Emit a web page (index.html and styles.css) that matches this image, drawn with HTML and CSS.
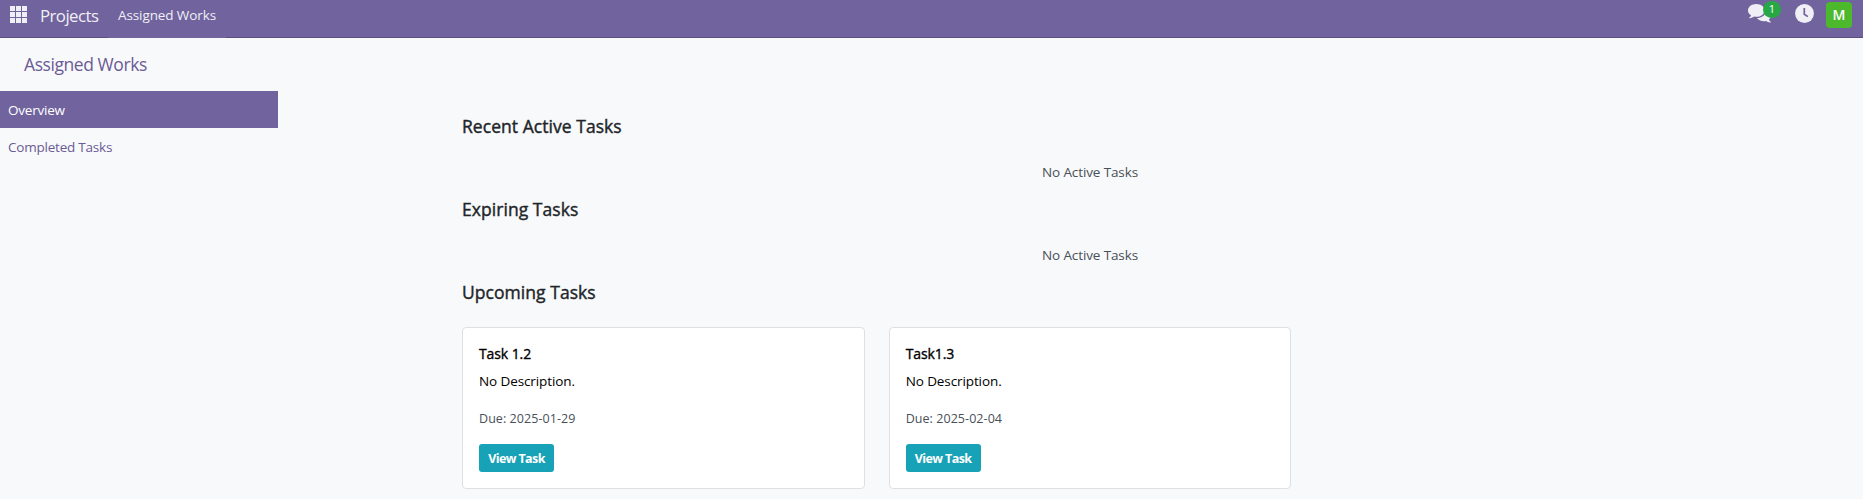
FILE: index.html
```html
<!DOCTYPE html>
<html lang="en">
<head>
<meta charset="utf-8">
<title>Assigned Works</title>
<link rel="stylesheet" href="styles.css">
</head>
<body>
<header class="navbar">
  <svg class="apps" width="17" height="17" viewBox="0 0 17 17" fill="currentColor"><path d="M0 0h5v5H0zM6 0h5v5H6zM12 0h5v5h-5zM0 6h5v5H0zM6 6h5v5H6zM12 6h5v5h-5zM0 12h5v5H0zM6 12h5v5H6zM12 12h5v5h-5z"/></svg>
  <a class="brand"><span>Projects</span></a>
  <a class="nav-item"><span>Assigned Works</span></a>
  <div class="systray">
    <div class="messages">
      <svg width="23" height="19" viewBox="0 0 23 19" fill="currentColor"><path d="M17.6 6.2c3.200.7 5.400 2.800 5.400 5.300 0 1.500-.8 2.900-2.100 3.900.3.900.9 1.600 1.700 2.300.5.400.3.800-.3.800-1.700-.1-3.200-.7-4.400-1.500-.6.100-1.200.2-1.900.2-3.100 0-5.900-1.200-7.100-3.100 5-.1 8.900-3.100 8.900-6.800 0-.4-.1-.7-.2-1.100z"/><path d="M8.300 0c4.600 0 8.300 2.800 8.300 6.400s-3.700 6.400-8.300 6.400c-.7 0-1.400-.1-2-.2-1.300.9-2.800 1.500-4.500 1.600-.6 0-.8-.4-.3-.8.8-.6 1.300-1.300 1.500-2.200C1.100 10 0 8.300 0 6.400 0 2.800 3.700 0 8.300 0z"/></svg>
      <span class="badge">1</span>
    </div>
    <svg class="clock" width="19" height="19" viewBox="0 0 19 19"><circle cx="9.500" cy="9.500" r="9.400" fill="currentColor"/><path d="M9.300 4v6.200l3.600 2.400" fill="none" stroke="#71639e" stroke-width="1.700"/></svg>
    <span class="avatar">M</span>
  </div>
</header>
<div class="layout">
  <aside class="sidebar">
    <h1 class="page-title"><span>Assigned Works</span></h1>
    <a class="side-link side-link-active"><span>Overview</span></a>
    <a class="side-link"><span>Completed Tasks</span></a>
  </aside>
  <main class="content">
    <h2 class="heading"><span>Recent Active Tasks</span></h2>
    <p class="empty"><span>No Active Tasks</span></p>
    <h2 class="heading"><span>Expiring Tasks</span></h2>
    <p class="empty"><span>No Active Tasks</span></p>
    <h2 class="heading"><span>Upcoming Tasks</span></h2>
    <div class="cards">
      <article class="card">
        <h3 class="card-title"><span>Task 1.2</span></h3>
        <p class="card-text"><span>No Description.</span></p>
        <p class="due"><span>Due: 2025-01-29</span></p>
        <a class="button"><span>View Task</span></a>
      </article>
      <article class="card">
        <h3 class="card-title"><span>Task1.3</span></h3>
        <p class="card-text"><span>No Description.</span></p>
        <p class="due"><span>Due: 2025-02-04</span></p>
        <a class="button"><span>View Task</span></a>
      </article>
    </div>
  </main>
</div>
</body>
</html>
```
FILE: styles.css
```css
* { box-sizing: border-box; }
body {
  margin: 0;
  background: #f8f9fa;
  color: #212529;
  font-family: "Open Sans", "Noto Sans", sans-serif;
  font-size: 13.5px;
  line-height: 20px;
}
h1, h2, h3, p { margin: 0; }
.navbar {
  display: flex;
  height: 38px;
  background: linear-gradient(#5a4f7f, #5a4f7f) bottom / 100% 1px no-repeat #71639e;
  color: #f0eff5;
}
.apps { margin: 6px 0 0 10px; }
.brand {
  width: 81px;
  padding: 6px 0 0 13px;
  font-size: 16.8px;
  letter-spacing: -0.55px;
}
.nav-item {
  width: 118px;
  padding: 5px 0 0 10px;
  background: #71639e;
  letter-spacing: -0.1px;
  white-space: nowrap;
}
.systray { display: flex; margin-left: auto; padding-right: 11px; }
.messages { position: relative; width: 47px; padding-top: 4px; }
.badge {
  position: absolute;
  left: 15px;
  top: 1px;
  width: 18px;
  height: 17px;
  border-radius: 9px;
  background: #28a745;
  color: #fff;
  font-size: 11px;
  line-height: 16px;
  text-align: center;
}
.clock { margin-top: 4px; }
.avatar {
  width: 26px;
  height: 26px;
  margin: 2px 0 0 12px;
  border-radius: 4px;
  background: #4cb82c;
  color: #fff;
  font-size: 14px;
  font-weight: 600;
  line-height: 26px;
  text-align: center;
}
.layout { display: flex; }
.sidebar { width: 278px; flex: none; color: #6b5b95; }
.page-title {
  height: 53px;
  padding: 16px 0 0 24px;
  font-size: 17.5px;
  font-weight: 400;
  letter-spacing: -0.43px;
}
.side-link { display: block; height: 37px; padding: 9px 8px 0; letter-spacing: -0.22px; }
.side-link-active { background: #71639e; color: #fff; }
.content { width: 1256px; margin-left: 184px; padding-top: 77px; }
.heading {
  height: 40px;
  font-size: 17.5px;
  font-weight: 400;
  line-height: 22px;
  letter-spacing: 0.05px;
  -webkit-text-stroke: 0.4px currentColor;
}
.empty {
  height: 43px;
  padding-top: 7px;
  color: #495057;
  text-align: center;
  letter-spacing: -0.12px;
}
.cards {
  display: grid;
  grid-template-columns: repeat(3, 1fr);
  gap: 24px;
  margin-top: 6px;
}
.card {
  height: 162px;
  padding: 16px;
  border: 1px solid #dee0e2;
  border-radius: 4px;
  background: #fff;
  color: #000;
}
.card-title {
  height: 27px;
  font-size: 14px;
  font-weight: 400;
  letter-spacing: -0.1px;
  -webkit-text-stroke: 0.35px currentColor;
}
.card-text { height: 38px; letter-spacing: -0.1px; }
.due { height: 35px; font-size: 12.5px; color: #495057; letter-spacing: 0.06px; }
.button {
  display: flex;
  align-items: center;
  justify-content: center;
  width: 75px;
  height: 28px;
  padding-top: 1px;
  border-radius: 3px;
  background: #17a2b8;
  color: #fff;
  font-size: 12.5px;
  font-weight: 700;
  letter-spacing: -0.6px;
  white-space: nowrap;
}
```
